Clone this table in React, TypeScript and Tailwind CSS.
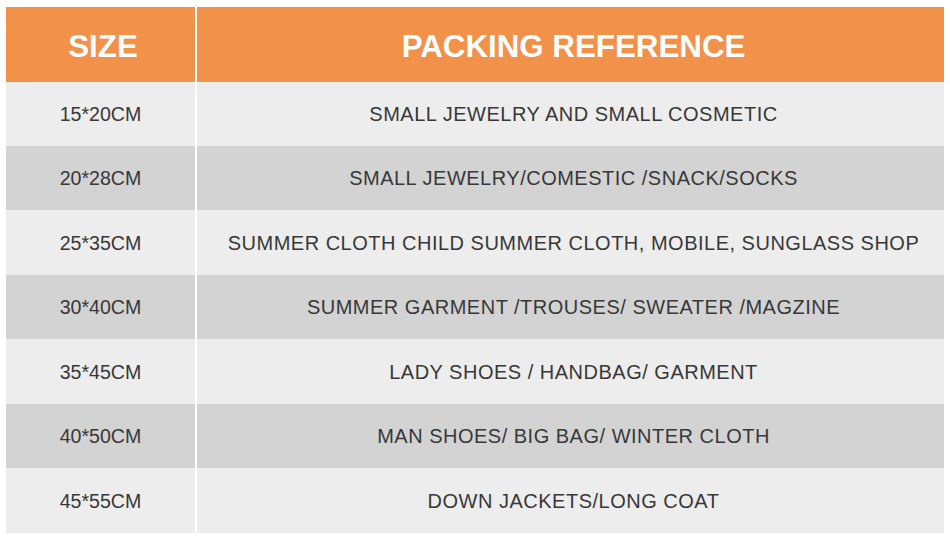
const rows = [
  { size: '15*20CM', use: 'SMALL JEWELRY AND SMALL COSMETIC', h: 'h-[64px]' },
  { size: '20*28CM', use: 'SMALL JEWELRY/COMESTIC /SNACK/SOCKS', h: 'h-[64px]' },
  { size: '25*35CM', use: 'SUMMER CLOTH CHILD SUMMER CLOTH, MOBILE, SUNGLASS SHOP', h: 'h-[65px]' },
  { size: '30*40CM', use: 'SUMMER GARMENT /TROUSES/ SWEATER /MAGZINE', h: 'h-[64px]' },
  { size: '35*45CM', use: 'LADY SHOES / HANDBAG/ GARMENT', h: 'h-[65px]' },
  { size: '40*50CM', use: 'MAN SHOES/ BIG BAG/ WINTER CLOTH', h: 'h-[64px]' },
  { size: '45*55CM', use: 'DOWN JACKETS/LONG COAT', h: 'h-[65px]' },
];

export default function App() {
  return (
    <div className="w-[950px] h-[540px] bg-white px-[6px] py-[7px] font-['Liberation_Sans',Arial,sans-serif]">
      <div className="grid grid-cols-[189px_747px] gap-x-[2px]">
        {/* Header */}
        <div className="h-[75px] bg-[#f29149] flex items-center justify-center pt-[5px] pl-[5px] text-white font-bold text-[31.3px]">
          SIZE
        </div>
        <div className="h-[75px] bg-[#f29149] flex items-center justify-center pt-[5px] pl-[6px] text-white font-bold text-[31.3px]">
          PACKING REFERENCE
        </div>

        {/* Body */}
        {rows.map((r, i) => {
          const bg = i % 2 === 0 ? 'bg-[#ededed]' : 'bg-[#d3d3d3]';
          return (
            <div key={r.size} className="contents">
              <div className={`${r.h} ${bg} flex items-center justify-center pt-[2px] text-[19.6px] text-[#383838]`}>
                {r.size}
              </div>
              <div className={`${r.h} ${bg} flex items-center justify-center pl-[6px] text-[20px] tracking-[0.5px] text-[#383838]`}>
                {r.use}
              </div>
            </div>
          );
        })}
      </div>
    </div>
  );
}
